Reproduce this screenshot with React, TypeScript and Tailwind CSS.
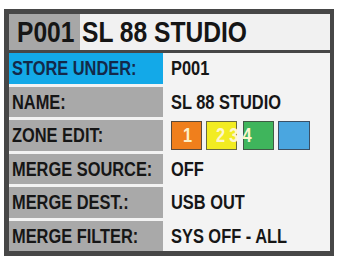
import React from "react";

const FONT = { fontFamily: '"Liberation Sans", Arial, sans-serif' };

const rows: { label: string; value?: string; active?: boolean }[] = [
  { label: "STORE UNDER:", value: "P001", active: true },
  { label: "NAME:", value: "SL 88 STUDIO" },
  { label: "ZONE EDIT:" },
  { label: "MERGE SOURCE:", value: "OFF" },
  { label: "MERGE DEST.:", value: "USB OUT" },
  { label: "MERGE FILTER:", value: "SYS OFF - ALL" },
];

// condensed look: no narrow face is installed, so squeeze the glyphs
function Narrow({ children, className = "" }: { children: React.ReactNode; className?: string }) {
  return <span className={"inline-block whitespace-nowrap origin-left scale-x-[0.82] " + className}>{children}</span>;
}

function ZoneBoxes() {
  return (
    <div className="relative flex items-center gap-[4px] h-full">
      <div className="w-[31px] h-[29px] border border-[#5a4a3a] bg-[#f07f1c] flex items-center pl-[11px] text-[20px] text-[#fdf0c8]">
        <Narrow>1</Narrow>
      </div>
      <div className="w-[31px] h-[29px] border border-[#6a6a40] bg-[#f2ec22]" />
      <div className="ml-[2px] w-[31px] h-[29px] border border-[#3f5a45] bg-[#3fb55c]" />
      <div className="w-[32px] h-[29px] border border-[#3a5066] bg-[#4aa6e0]" />
      <span className="absolute left-[45px] top-1/2 -translate-y-1/2 text-[20px] text-[#fdf6d0]">
        <Narrow className="tracking-[5px]">234</Narrow>
      </span>
    </div>
  );
}

export default function App() {
  return (
    <div className="w-[337px] h-[260px] bg-white pt-[9px] pl-[4px]" style={FONT}>
      <div className="w-[330px] h-[247px] border-[5px] border-r-[4px] border-[#474747] bg-[#474747] flex flex-col">
        <div className="h-[36px] flex items-center bg-[#f1f1f1] text-[#151515] text-[30px] font-bold leading-none">
          <div className="w-[71px] h-full bg-[#a7a7a7] flex items-center pl-[8px]">
            <Narrow>P001</Narrow>
          </div>
          <div className="pl-[2px]">
            <Narrow>SL 88 STUDIO</Narrow>
          </div>
        </div>
        <div className="mt-[3px] flex-1 bg-[#f3f3f3] flex flex-col gap-[3px] text-[20px] font-bold leading-none text-[#161616]">
          {rows.map((r) => (
            <div key={r.label} className="flex-1 flex">
              <div
                className={
                  r.active
                    ? "w-[154px] bg-[#13a9e8] text-[#13294a] flex items-center pl-[3px]"
                    : "w-[154px] bg-[#a9a9a9] flex items-center pl-[3px]"
                }
              >
                <Narrow>{r.label}</Narrow>
              </div>
              <div className="flex-1 flex items-center pl-[8px]">
                {r.value ? <Narrow>{r.value}</Narrow> : <ZoneBoxes />}
              </div>
            </div>
          ))}
        </div>
      </div>
    </div>
  );
}
